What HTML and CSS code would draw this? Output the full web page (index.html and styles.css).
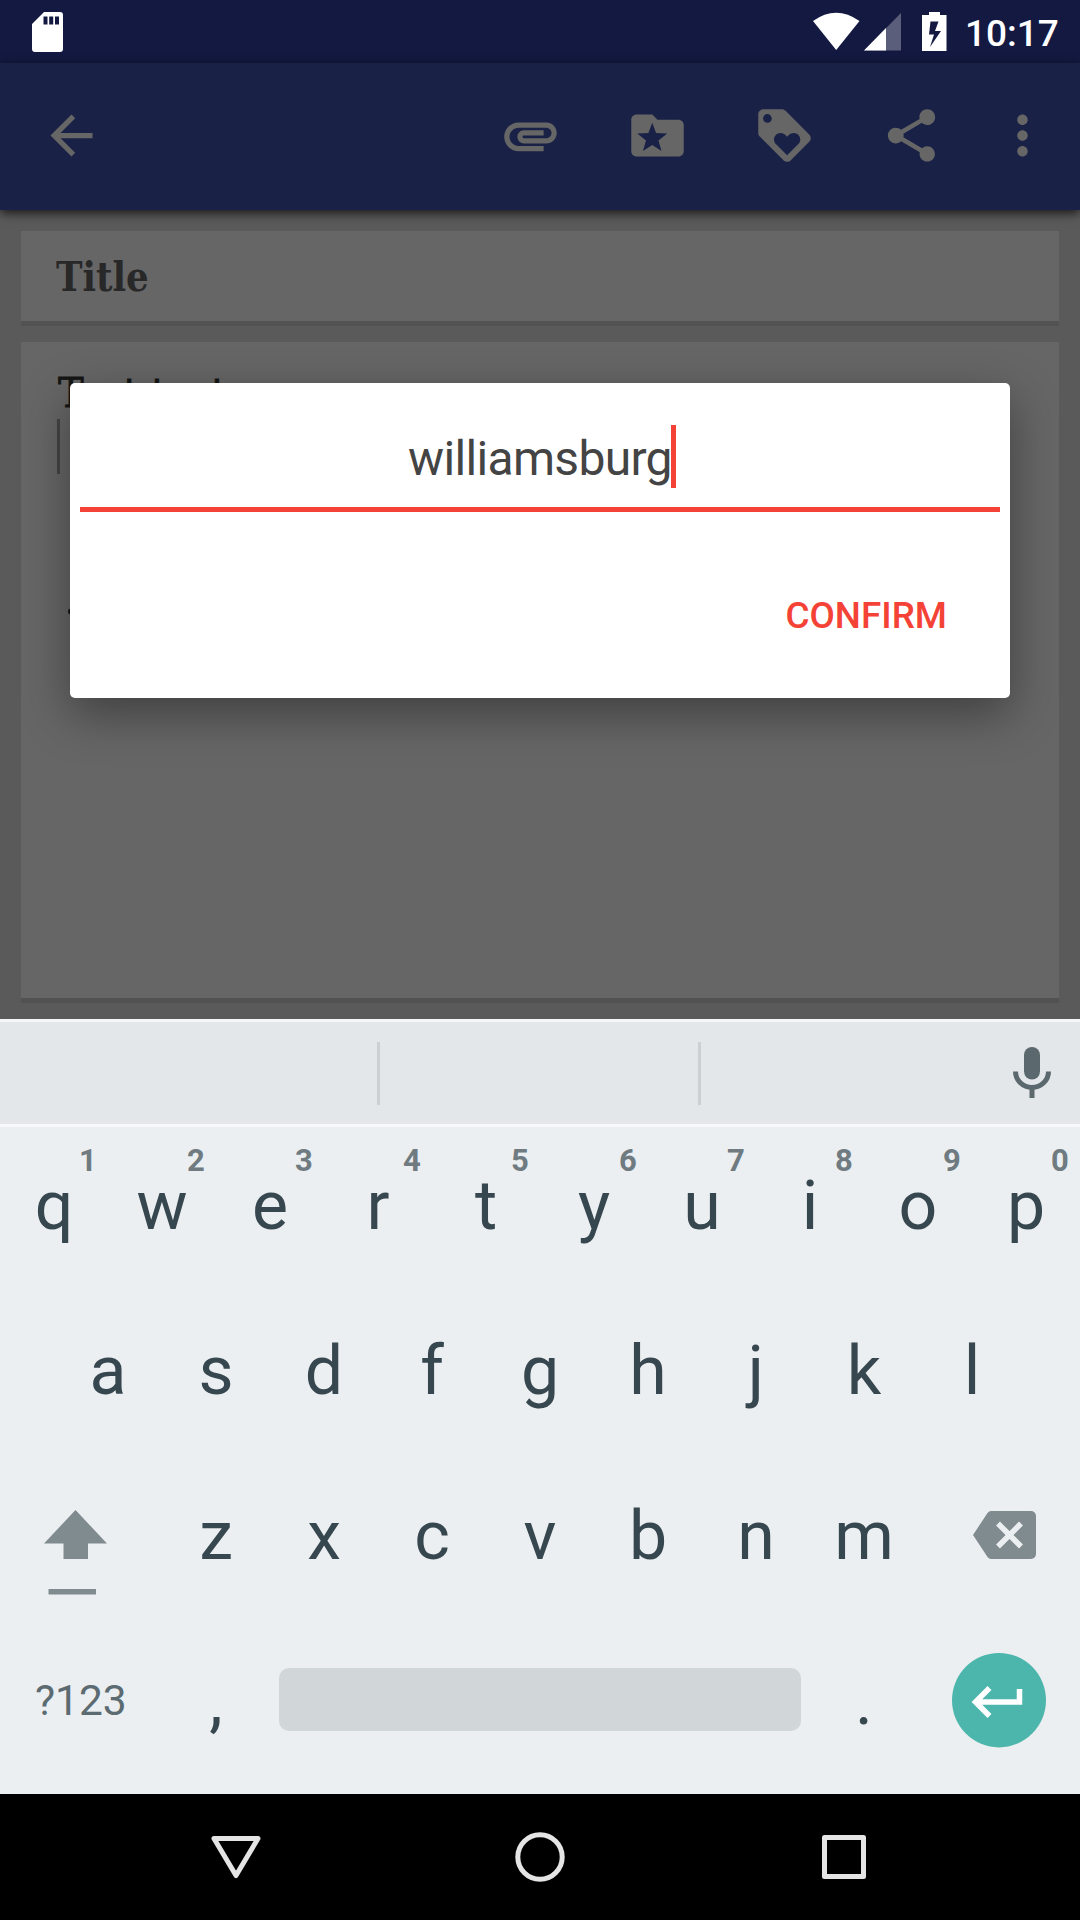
FILE: index.html
```html
<!DOCTYPE html>
<html lang="en">
<head>
<meta charset="utf-8">
<title>Note editor</title>
<link rel="stylesheet" href="styles.css">
</head>
<body>
<div class="screen">
  <header class="status">
    <svg class="sd" width="31" height="40" viewBox="0 0 31 40"><path fill="#fff" fill-rule="evenodd" d="M12 0h16a3 3 0 0 1 3 3v34a3 3 0 0 1-3 3H3a3 3 0 0 1-3-3V12zM11.500 4.500v8h4v-8zM17.200 4.500v8h4v-8zM23 4.500v8h4v-8z"/></svg>
    <svg class="system" width="134" height="40" viewBox="0 0 134 40">
      <path fill="#fff" d="M0 9Q23 -7.500 46.500 9L23.200 38z"/>
      <path fill="#fff" fill-opacity=".3" d="M51 38.500L88 1v37.500z"/>
      <path fill="#fff" d="M51 38.500L73 16v22.500z"/>
      <path fill="#fff" fill-rule="evenodd" d="M116 0h11v3h6.500v36H109V3h7zM117.500 9.500L116 22.500h5L117 35l11-16h-6l3.500-9.500z"/>
    </svg>
    <span class="clock">10:17</span>
  </header>
  <nav class="toolbar">
    <svg class="icon back" viewBox="0 0 24 24"><path d="M20 11H7.830l5.590-5.590L12 4l-8 8 8 8 1.410-1.410L7.830 13H20v-2z"/></svg>
    <svg class="icon" viewBox="0 0 24 24"><path d="M2 12.500C2 9.460 4.460 7 7.500 7H18c2.210 0 4 1.790 4 4s-1.790 4-4 4H9.500C8.120 15 7 13.880 7 12.500S8.120 10 9.500 10H17v2H9.410c-.55 0-.55 1 0 1H18c1.100 0 2-.9 2-2s-.9-2-2-2H7.500C5.570 9 4 10.570 4 12.500S5.570 16 7.500 16H17v2H7.500C4.460 18 2 15.540 2 12.500z"/></svg>
    <svg class="icon" viewBox="0 0 24 24"><path fill-rule="evenodd" d="M20 6h-8l-2-2H4c-1.100 0-2 .9-2 2v12c0 1.100.9 2 2 2h16c1.100 0 2-.9 2-2V8c0-1.100-.9-2-2-2zM10 7.100L11.470 11.080 15.700 11.250 12.380 13.870 13.530 17.950 10 15.600 6.470 17.950 7.620 13.870 4.300 11.250 8.530 11.080z"/></svg>
    <svg class="icon" viewBox="0 0 24 24"><path fill-rule="evenodd" d="M21.410 11.580l-9-9C12.050 2.220 11.550 2 11 2H4c-1.100 0-2 .9-2 2v7c0 .55.220 1.050.590 1.420l9 9c.36.36.860.58 1.410.58.55 0 1.050-.22 1.410-.59l7-7c.37-.36.590-.86.590-1.410 0-.55-.23-1.060-.59-1.420zM5.500 7.150a1.650 1.650 0 1 1 0-3.300 1.650 1.650 0 0 1 0 3.300zm11.770 8.120L13 19.540l-4.270-4.270C8.280 14.810 8 14.190 8 13.500c0-1.380 1.120-2.500 2.500-2.500.69 0 1.320.28 1.770.74l.73.72.73-.73c.45-.45 1.080-.73 1.770-.73 1.380 0 2.500 1.120 2.500 2.500 0 .69-.28 1.320-.73 1.770z"/></svg>
    <svg class="icon" viewBox="0 0 24 24"><path d="M18 16.080c-.76 0-1.440.3-1.960.77L8.910 12.700c.05-.23.090-.46.090-.7s-.04-.47-.09-.7l7.050-4.110c.54.5 1.250.81 2.040.81 1.660 0 3-1.340 3-3s-1.340-3-3-3-3 1.340-3 3c0 .24.040.47.090.7L8.040 9.810C7.500 9.310 6.790 9 6 9c-1.660 0-3 1.340-3 3s1.340 3 3 3c.79 0 1.500-.31 2.040-.81l7.120 4.160c-.05.21-.08.43-.08.65 0 1.610 1.310 2.920 2.920 2.920 1.610 0 2.920-1.310 2.920-2.920s-1.310-2.920-2.920-2.920z"/></svg>
    <svg class="icon more" viewBox="0 0 24 24"><path d="M12 8c1.100 0 2-.9 2-2s-.9-2-2-2-2 .9-2 2 .9 2 2 2zm0 2c-1.100 0-2 .9-2 2s.9 2 2 2 2-.9 2-2-.9-2-2-2zm0 6c-1.100 0-2 .9-2 2s.9 2 2 2 2-.9 2-2-.9-2-2-2z"/></svg>
  </nav>
  <main class="editor">
    <div class="card title"><span class="slab">Title</span></div>
    <div class="card note">
      <span class="slab">Test text</span><i class="note-caret"></i>
      <svg class="alarm" width="40" height="40" viewBox="0 0 40 40"><circle cx="4" cy="4.500" r="3"/><circle cx="18" cy="20" r="15"/></svg>
    </div>
    <section class="dialog">
      <div class="field"><span>williamsburg</span><i class="caret"></i></div>
      <div class="actions"><span class="confirm">CONFIRM</span></div>
    </section>
  </main>
  <section class="keyboard">
    <div class="strip">
      <i class="divider"></i><i class="divider"></i>
      <svg class="mic" width="38" height="51" viewBox="0 0 38 51"><rect x="11" width="16" height="32.500" rx="8" fill="#5b696f"/><path d="M2.500 24.500a16.500 16 0 0 0 33 0M19 40v11" fill="none" stroke="#5b696f" stroke-width="5"/></svg>
    </div>
    <div class="row">
      <span class="key">q<b>1</b></span><span class="key">w<b>2</b></span><span class="key">e<b>3</b></span><span class="key">r<b>4</b></span><span class="key">t<b>5</b></span><span class="key">y<b>6</b></span><span class="key">u<b>7</b></span><span class="key">i<b>8</b></span><span class="key">o<b>9</b></span><span class="key">p<b>0</b></span>
    </div>
    <div class="row">
      <span class="key">a</span><span class="key">s</span><span class="key">d</span><span class="key">f</span><span class="key">g</span><span class="key">h</span><span class="key">j</span><span class="key">k</span><span class="key">l</span>
    </div>
    <div class="row">
      <span class="wide"><svg class="shift" width="63" height="85" viewBox="0 0 63 85"><path fill="#808b8f" d="M31.500 0L63 33.500H44V49H19.500V33.500H0zM4.500 79h47.500v5.500H4.500z"/></svg></span>
      <span class="key">z</span><span class="key">x</span><span class="key">c</span><span class="key">v</span><span class="key">b</span><span class="key">n</span><span class="key">m</span>
      <span class="wide"><svg class="delete" width="63" height="48" viewBox="0 0 63 48"><path fill="#808b8f" d="M18 0h40a5 5 0 0 1 5 5v38a5 5 0 0 1-5 5H18q-2 0-3.500-2L0 24 14.500 2Q16 0 18 0z"/><path d="M25 12.500l23 23M48 12.500L25 35.500" stroke="#eceff1" stroke-width="5.500"/></svg></span>
    </div>
    <div class="row">
      <span class="wide symbols">?123</span><span class="key">,</span><i class="space"></i><span class="key">.</span>
      <span class="wide"><svg class="enter" width="95" height="95" viewBox="0 0 95 95"><ellipse cx="47" cy="47.200" rx="47" ry="47.200" fill="#4db6ac"/><path d="M67.500 36v13H26M37.500 35L23.500 49l14 14" fill="none" stroke="#fff" stroke-width="5.500"/></svg></span>
    </div>
  </section>
  <footer class="navbar">
    <svg width="50" height="50" viewBox="0 0 50 50"><path d="M3 6.500h44L25 43.500z"/></svg>
    <svg width="50" height="50" viewBox="0 0 50 50"><circle cx="25" cy="25" r="22.200"/></svg>
    <svg width="50" height="50" viewBox="0 0 50 50"><rect x="5.500" y="5.500" width="39" height="39"/></svg>
  </footer>
</div>
</body>
</html>
```
FILE: styles.css
```css
* { box-sizing: border-box; }
body { margin: 0; font-family: Roboto, sans-serif; }
svg { display: block; flex: none; }
.screen { width: 1080px; height: 1920px; display: flex; flex-direction: column; overflow: hidden; }

.status { height: 63px; background: #141941; color: #fff; display: flex; align-items: flex-start; padding: 12px 22px 0 32px; }
.system { margin-left: auto; }
.clock { font-size: 37px; font-weight: 500; line-height: 43px; margin-left: 18px; width: 93px; white-space: nowrap; }

.toolbar { height: 147px; background: #1a2147; display: flex; align-items: center; gap: 64px; padding: 0 26px 2px 40px; position: relative; z-index: 1; box-shadow: 0 3px 10px rgba(0,0,0,.75); }
.icon { width: 63px; height: 63px; fill: #666; }
.back { margin-right: auto; }
.more { margin-left: -16px; }

.editor { height: 809px; background: #5a5a5a; padding: 21px 21px 16px; display: flex; flex-direction: column; gap: 16px; position: relative; overflow: hidden; }
.card { background: #666; border-bottom: 5px solid #525252; }
.title { height: 95px; padding: 21px 35px; color: #282828; }
.note { height: 661px; padding: 26px 36px; color: #151515; }
.slab { display: block; width: max-content; font: bold 41px/50px "DejaVu Serif", serif; transform: scaleX(.87); transform-origin: 0 0; }
.note .slab { font-weight: normal; margin-left: 1px; transform: scaleX(.94); -webkit-text-stroke: .8px #151515; }
.note-caret { display: block; width: 3px; height: 55px; background: #444; margin-top: 1px; }
.alarm { margin: 133px 0 0 10px; fill: #151515; }
.alarm circle + circle { fill: #3c3c3c; }

.dialog { position: absolute; left: 70px; top: 173px; width: 940px; height: 315px; background: #fff; border-radius: 5px; box-shadow: 0 16px 48px rgba(0,0,0,.38); padding: 0 10px; }
.field { height: 129px; border-bottom: 5px solid #f44336; display: flex; justify-content: center; padding-top: 42px; font-size: 48px; line-height: 68px; letter-spacing: -.68px; color: #444; }
.caret { flex: none; width: 5px; height: 63px; background: #f44336; margin: 0 -4px 0 -1px; }
.actions { display: flex; justify-content: flex-end; padding: 82px 53px 0 0; }
.confirm { font-size: 36.800px; font-weight: 500; line-height: 44px; color: #f44336; }

.keyboard { height: 775px; background: #eceff1; color: #37474f; }
.strip { height: 108px; background: #e3e7ea; border-top: 3px solid #f6f7f8; border-bottom: 3px solid #f6f8f9; display: flex; padding-top: 20px; }
.divider { width: 3px; height: 63px; background: #cbd0d3; margin-left: 377px; }
.divider + .divider { margin-left: 318px; }
.mic { margin: 5px 29px 0 auto; }
.row { height: 165px; display: flex; justify-content: center; }
.key { width: 108px; font-size: 68px; line-height: 80px; padding: 39px 0 0; text-align: center; position: relative; }
.key b { position: absolute; right: 0; top: 16px; width: 40px; font-size: 31px; line-height: 36px; color: #6f7b80; }
.wide { width: 162px; }
.shift { margin: 53px 0 0 44px; }
.delete { margin: 54px 0 0 55px; }
.symbols { padding: 54px 0 0 35px; font-size: 42.500px; line-height: 50px; color: #5b6b71; }
.space { width: 522px; height: 63px; margin: 46px 9px 0; border-radius: 10px; background: #d1d6d9; }
.enter { margin: 31px 0 0 34px; }

.navbar { height: 126px; background: #000; display: flex; justify-content: center; align-items: center; gap: 254px; }
.navbar svg { fill: none; stroke: #e5e5e5; stroke-width: 5; stroke-linejoin: round; }
```
